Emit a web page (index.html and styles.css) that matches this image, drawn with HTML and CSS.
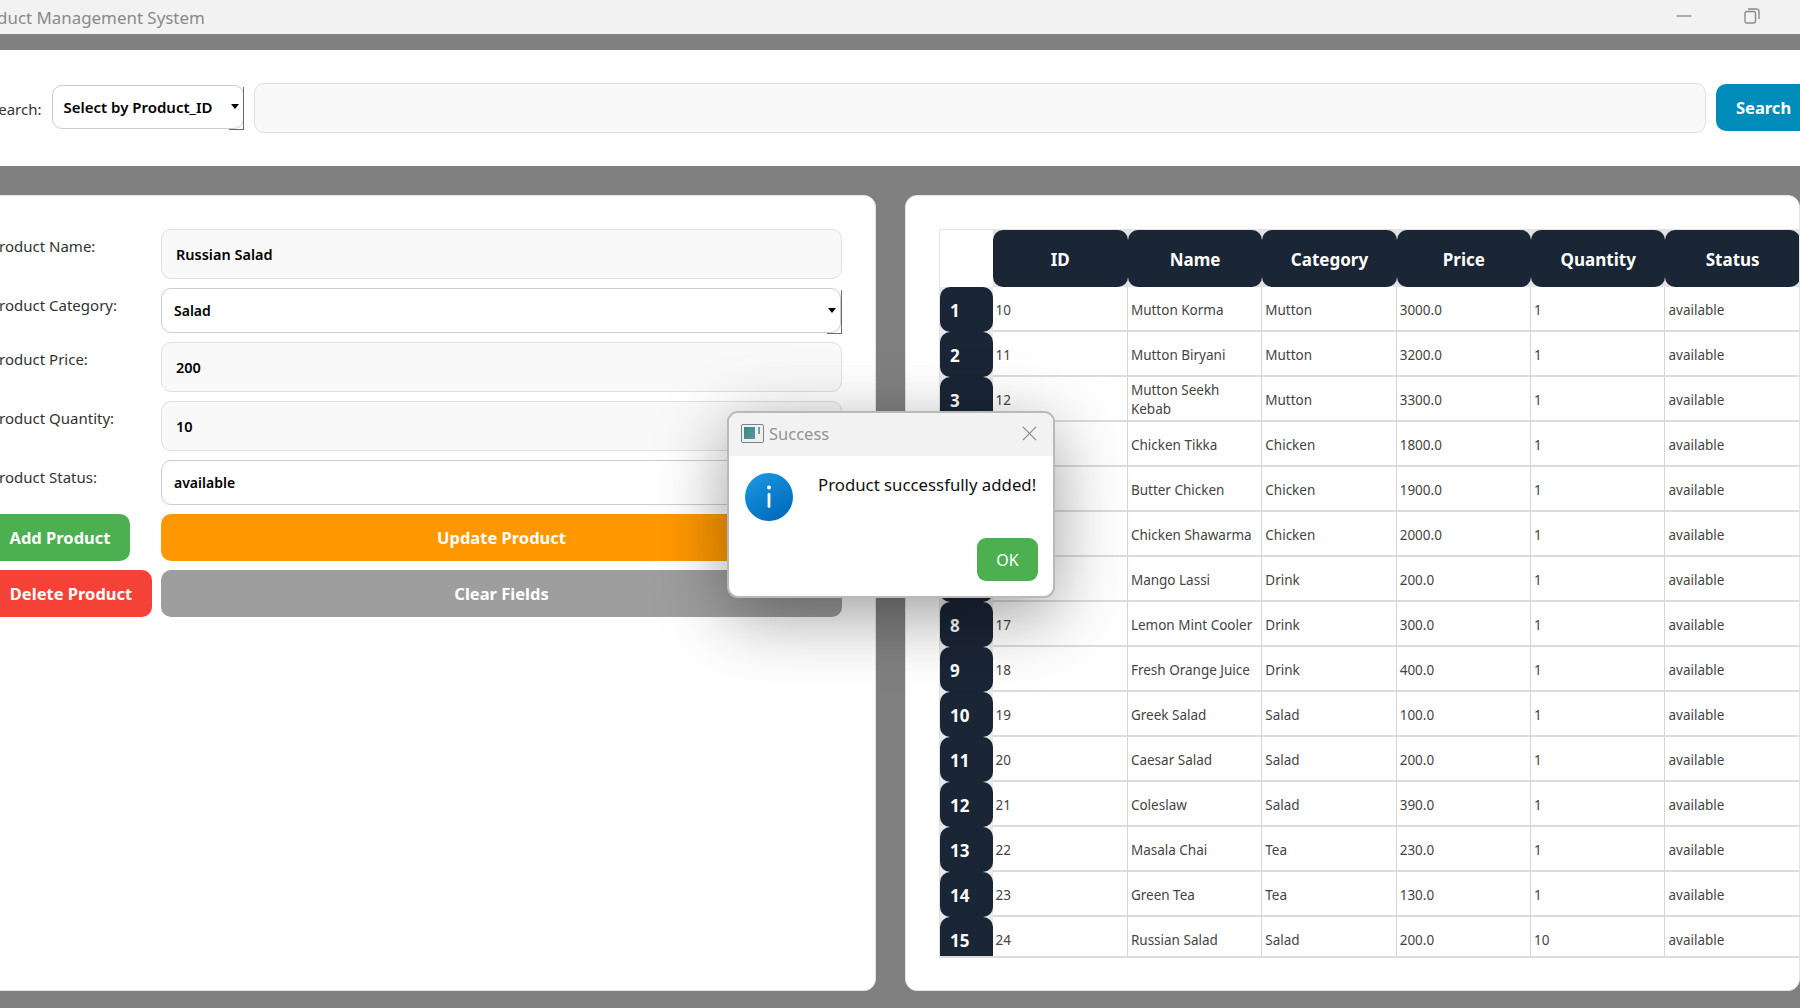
FILE: index.html
```html
<!DOCTYPE html>
<html lang="en">
<head>
<meta charset="utf-8">
<title>Product Management System</title>
<link rel="stylesheet" href="styles.css">
</head>
<body>
<div class="app">
  <header class="titlebar">
    <span class="app-title">Product Management System</span>
    <div class="win-controls">
      <svg class="win-icon" viewBox="0 0 16 16"><path d="M0.5 8H15.5" /></svg>
      <svg class="win-icon" viewBox="0 0 16 16"><rect x="1" y="3.5" width="10.5" height="11.5" rx="2"/><path d="M4 1H12.5A2.5 2.5 0 0 1 15 3.5V11"/></svg>
    </div>
  </header>
  <section class="searchbar">
    <span class="field-label">Search:</span>
    <div class="select select-search">Select by Product_ID<i class="caret"></i></div>
    <input class="input input-search" type="text" value="">
    <button class="btn btn-search">Search</button>
  </section>
  <main class="content">
    <section class="panel panel-form">
      <div class="form">
        <label class="form-label">Product Name:</label>
        <input class="input input-tall" type="text" value="Russian Salad">
        <label class="form-label">Product Category:</label>
        <div class="select select-form">Salad<i class="caret"></i></div>
        <label class="form-label">Product Price:</label>
        <input class="input input-tall" type="text" value="200">
        <label class="form-label">Product Quantity:</label>
        <input class="input input-tall" type="text" value="10">
        <label class="form-label">Product Status:</label>
        <div class="select select-form">available<i class="caret"></i></div>
        <div><button class="btn btn-add">Add Product</button></div>
        <button class="btn btn-update">Update Product</button>
        <div><button class="btn btn-delete">Delete Product</button></div>
        <button class="btn btn-clear">Clear Fields</button>
      </div>
    </section>
    <section class="panel panel-table">
      <div class="table">
        <div class="row row-head">
          <div class="corner"></div>
          <div class="th"><span>ID</span></div><div class="th"><span>Name</span></div><div class="th"><span>Category</span></div><div class="th"><span>Price</span></div><div class="th"><span>Quantity</span></div><div class="th"><span>Status</span></div>
        </div>
        <div class="row"><div class="rh"><span>1</span></div><div class="td">10</div><div class="td">Mutton Korma</div><div class="td">Mutton</div><div class="td">3000.0</div><div class="td">1</div><div class="td">available</div></div>
        <div class="row"><div class="rh"><span>2</span></div><div class="td">11</div><div class="td">Mutton Biryani</div><div class="td">Mutton</div><div class="td">3200.0</div><div class="td">1</div><div class="td">available</div></div>
        <div class="row"><div class="rh"><span>3</span></div><div class="td">12</div><div class="td">Mutton Seekh Kebab</div><div class="td">Mutton</div><div class="td">3300.0</div><div class="td">1</div><div class="td">available</div></div>
        <div class="row"><div class="rh"><span>4</span></div><div class="td">13</div><div class="td">Chicken Tikka</div><div class="td">Chicken</div><div class="td">1800.0</div><div class="td">1</div><div class="td">available</div></div>
        <div class="row"><div class="rh"><span>5</span></div><div class="td">14</div><div class="td">Butter Chicken</div><div class="td">Chicken</div><div class="td">1900.0</div><div class="td">1</div><div class="td">available</div></div>
        <div class="row"><div class="rh"><span>6</span></div><div class="td">15</div><div class="td">Chicken Shawarma</div><div class="td">Chicken</div><div class="td">2000.0</div><div class="td">1</div><div class="td">available</div></div>
        <div class="row"><div class="rh"><span>7</span></div><div class="td">16</div><div class="td">Mango Lassi</div><div class="td">Drink</div><div class="td">200.0</div><div class="td">1</div><div class="td">available</div></div>
        <div class="row"><div class="rh"><span>8</span></div><div class="td">17</div><div class="td">Lemon Mint Cooler</div><div class="td">Drink</div><div class="td">300.0</div><div class="td">1</div><div class="td">available</div></div>
        <div class="row"><div class="rh"><span>9</span></div><div class="td">18</div><div class="td">Fresh Orange Juice</div><div class="td">Drink</div><div class="td">400.0</div><div class="td">1</div><div class="td">available</div></div>
        <div class="row"><div class="rh"><span>10</span></div><div class="td">19</div><div class="td">Greek Salad</div><div class="td">Salad</div><div class="td">100.0</div><div class="td">1</div><div class="td">available</div></div>
        <div class="row"><div class="rh"><span>11</span></div><div class="td">20</div><div class="td">Caesar Salad</div><div class="td">Salad</div><div class="td">200.0</div><div class="td">1</div><div class="td">available</div></div>
        <div class="row"><div class="rh"><span>12</span></div><div class="td">21</div><div class="td">Coleslaw</div><div class="td">Salad</div><div class="td">390.0</div><div class="td">1</div><div class="td">available</div></div>
        <div class="row"><div class="rh"><span>13</span></div><div class="td">22</div><div class="td">Masala Chai</div><div class="td">Tea</div><div class="td">230.0</div><div class="td">1</div><div class="td">available</div></div>
        <div class="row"><div class="rh"><span>14</span></div><div class="td">23</div><div class="td">Green Tea</div><div class="td">Tea</div><div class="td">130.0</div><div class="td">1</div><div class="td">available</div></div>
        <div class="row row-last"><div class="rh"><span>15</span></div><div class="td">24</div><div class="td">Russian Salad</div><div class="td">Salad</div><div class="td">200.0</div><div class="td">10</div><div class="td">available</div></div>
      </div>
    </section>
  </main>
</div>

<div class="dialog">
  <div class="dialog-title">
    <svg class="dialog-app-icon" viewBox="0 0 23 19">
      <defs><linearGradient id="tg" x1="0" y1="0" x2="1" y2="1"><stop offset="0" stop-color="#2f8f72"/><stop offset="1" stop-color="#6a8fae"/></linearGradient></defs>
      <rect x="0.5" y="0.5" width="22" height="18" rx="1.5" fill="#eef1f2" stroke="#7d8488"/>
      <rect x="3" y="3" width="11" height="12" fill="url(#tg)"/>
      <rect x="17" y="3" width="2" height="7" fill="#7f9f90"/>
    </svg>
    <span class="dialog-title-text">Success</span>
    <svg class="dialog-close" viewBox="0 0 16 16"><path d="M1 1L15 15M15 1L1 15"/></svg>
  </div>
  <div class="dialog-body">
    <svg class="dialog-info" viewBox="0 0 48 48">
      <defs><linearGradient id="ig" x1="0" y1="0" x2="0.6" y2="1"><stop offset="0" stop-color="#1d9be3"/><stop offset="1" stop-color="#006cbf"/></linearGradient></defs>
      <circle cx="24" cy="24" r="24" fill="url(#ig)"/>
      <circle cx="24" cy="14.5" r="2" fill="#fff"/>
      <rect x="22.6" y="20" width="2.8" height="15" rx="1.4" fill="#fff"/>
    </svg>
    <p class="dialog-message">Product successfully added!</p>
  </div>
  <div class="dialog-actions"><button class="btn-ok">OK</button></div>
</div>
</body>
</html>
```
FILE: styles.css
```css
* { box-sizing: border-box; }
html, body { margin: 0; height: 100%; }
body {
  width: 1800px; height: 1008px; overflow: hidden; position: relative;
  font-family: "Noto Sans", "Open Sans", sans-serif; background: #808080;
}
.app {
  width: 1900px; height: 1008px; margin-left: -70px;
  display: flex; flex-direction: column; background: #808080;
}
.titlebar {
  height: 34px; flex: none; background: #f2f2f2;
  display: flex; align-items: center; justify-content: space-between;
  padding: 0 70px 0 40px;
}
.app-title { font-size: 16.9px; color: #8a8a8a; }
.win-controls { display: flex; align-items: center; gap: 52px; margin-bottom: 2px; }
.win-icon { width: 16px; height: 16px; fill: none; stroke: #8c8c8c; stroke-width: 1.4; }

.searchbar {
  height: 116px; margin-top: 16px; flex: none; background: #fff;
  display: flex; align-items: center; gap: 10px; padding: 0 19px 0 60px;
}
.field-label { font-size: 15px; color: #333; margin-top: 1px; }
.input {
  display: block; font-family: inherit; font-size: 14.5px; font-weight: 600; color: #000;
  background: #f9f9f9; border: 1.5px solid #e0e0e0; border-radius: 10px;
  padding: 0 14px; outline: none; width: 100%;
}
.input-search { flex: 1; height: 50px; min-width: 0; }
.input-tall { height: 50px; }
.select {
  position: relative; background: #fff; border: 1.5px solid #ccc; border-radius: 10px;
  display: flex; align-items: center; font-weight: 600; color: #000;
}
.select::before {
  content: ""; position: absolute; right: -1.5px; top: 1px; bottom: -1.5px;
  border-right: 1.5px solid #6a6a6a;
}
.select::after {
  content: ""; position: absolute; right: -1.5px; bottom: -1.5px; width: 15px;
  border-bottom: 1.5px solid #6a6a6a;
}
.caret {
  position: absolute; right: 4px; top: 50%; margin-top: -3px;
  border-left: 4px solid transparent; border-right: 4px solid transparent; border-top: 5px solid #000;
}
.select-search { width: 192px; height: 44px; padding-left: 11px; flex: none; margin-top: -2px; font-size: 15px; }
.select-form { height: 45px; padding-left: 12px; font-size: 14px; margin-right: 1px; }
.btn {
  font-family: inherit; font-size: 16.5px; font-weight: 700; color: #fff; border: 0; border-radius: 10px;
  display: block; height: 47px; padding: 0;
}
.btn-search { width: 95px; flex: none; background: #008cba; text-align: left; padding: 0 0 1px 20px; margin-top: -1px; }
.btn-add { width: 140px; background: #4caf50; }
.btn-update { width: 100%; background: #ff9800; }
.btn-delete { width: 162px; background: #f44336; }
.btn-clear { width: 100%; background: #9e9e9e; }

.content { flex: 1; display: flex; gap: 29px; padding: 29px 30px 17px; min-height: 0; }
.panel { background: #fff; border-radius: 12px; border: 1px solid #e4e4e4; }
.panel-form { width: 916px; flex: none; padding: 33px 33px 0 29px; }
.form { display: grid; grid-template-columns: 171px 1fr; row-gap: 9px; align-items: start; }
.form-label { font-size: 15px; line-height: 22px; padding-top: 5.5px; color: #333; }

.panel-table { flex: 1; padding: 33px 0 0 33px; min-width: 0; }
.table {
  width: 860px; height: 729px; overflow: hidden;
  border-top: 1px solid #e3e3e3; border-left: 1px solid #e3e3e3; border-bottom: 2px solid #dcdcdc;
}
.row { display: grid; grid-template-columns: 52.5px 135.4px repeat(5, 134.4px); height: 45px; }
.row-head { height: 57px; }
.corner { background: #fff; }
.th { background: #e2e2e2; }
.th span {
  display: flex; align-items: center; justify-content: center; height: 100%; padding-top: 2px;
  background: #1a2535; border-radius: 10px; color: #fff; font-size: 17px; font-weight: 700;
}
.rh { background: #e8e8e8; }
.rh span {
  display: flex; align-items: center; height: 100%; padding: 1px 0 0 10px;
  background: #1a2535; border-radius: 10px; color: #fff; font-size: 17px; font-weight: 700;
}
.row-last .rh span { border-radius: 10px 10px 0 0; }
.td {
  display: flex; align-items: center; padding: 3px 3px 0 3px;
  font-size: 13.5px; line-height: 19px; color: #444;
  border-right: 1px solid #d6d6d6; border-bottom: 2px solid #dcdcdc;
}

.dialog {
  position: absolute; left: 727px; top: 411px; width: 328px; height: 187px;
  background: #fff; border: 2px solid #b9b9b9; border-radius: 11px;
  display: flex; flex-direction: column;
  box-shadow: 0 18px 70px rgba(0,0,0,.38);
}
.dialog-title {
  height: 43px; flex: none; background: #f2f2f2; display: flex; align-items: center; padding: 0 16px 0 12px;
  border-radius: 9px 9px 0 0;
}
.dialog-app-icon { width: 23px; height: 19px; flex: none; margin-top: -2px; }
.dialog-title-text { font-size: 16.5px; color: #929292; margin-left: 5px; flex: 1; margin-top: -2px; }
.dialog-close { width: 15px; height: 15px; fill: none; stroke: #8a8a8a; stroke-width: 1.3; margin-top: -2px; }
.dialog-body { display: flex; flex: none; height: 82px; padding: 17px 0 0 16px; }
.dialog-info { width: 48px; height: 48px; flex: none; }
.dialog-message { margin: 0 0 0 25px; font-size: 16.8px; line-height: 24px; color: #111; white-space: nowrap; }
.dialog-actions { display: flex; justify-content: flex-end; padding-right: 15px; }
.btn-ok {
  width: 61px; height: 43px; border: 0; border-radius: 9px; background: #4caf50; color: #fff;
  font-family: inherit; font-size: 16px;
}
```
